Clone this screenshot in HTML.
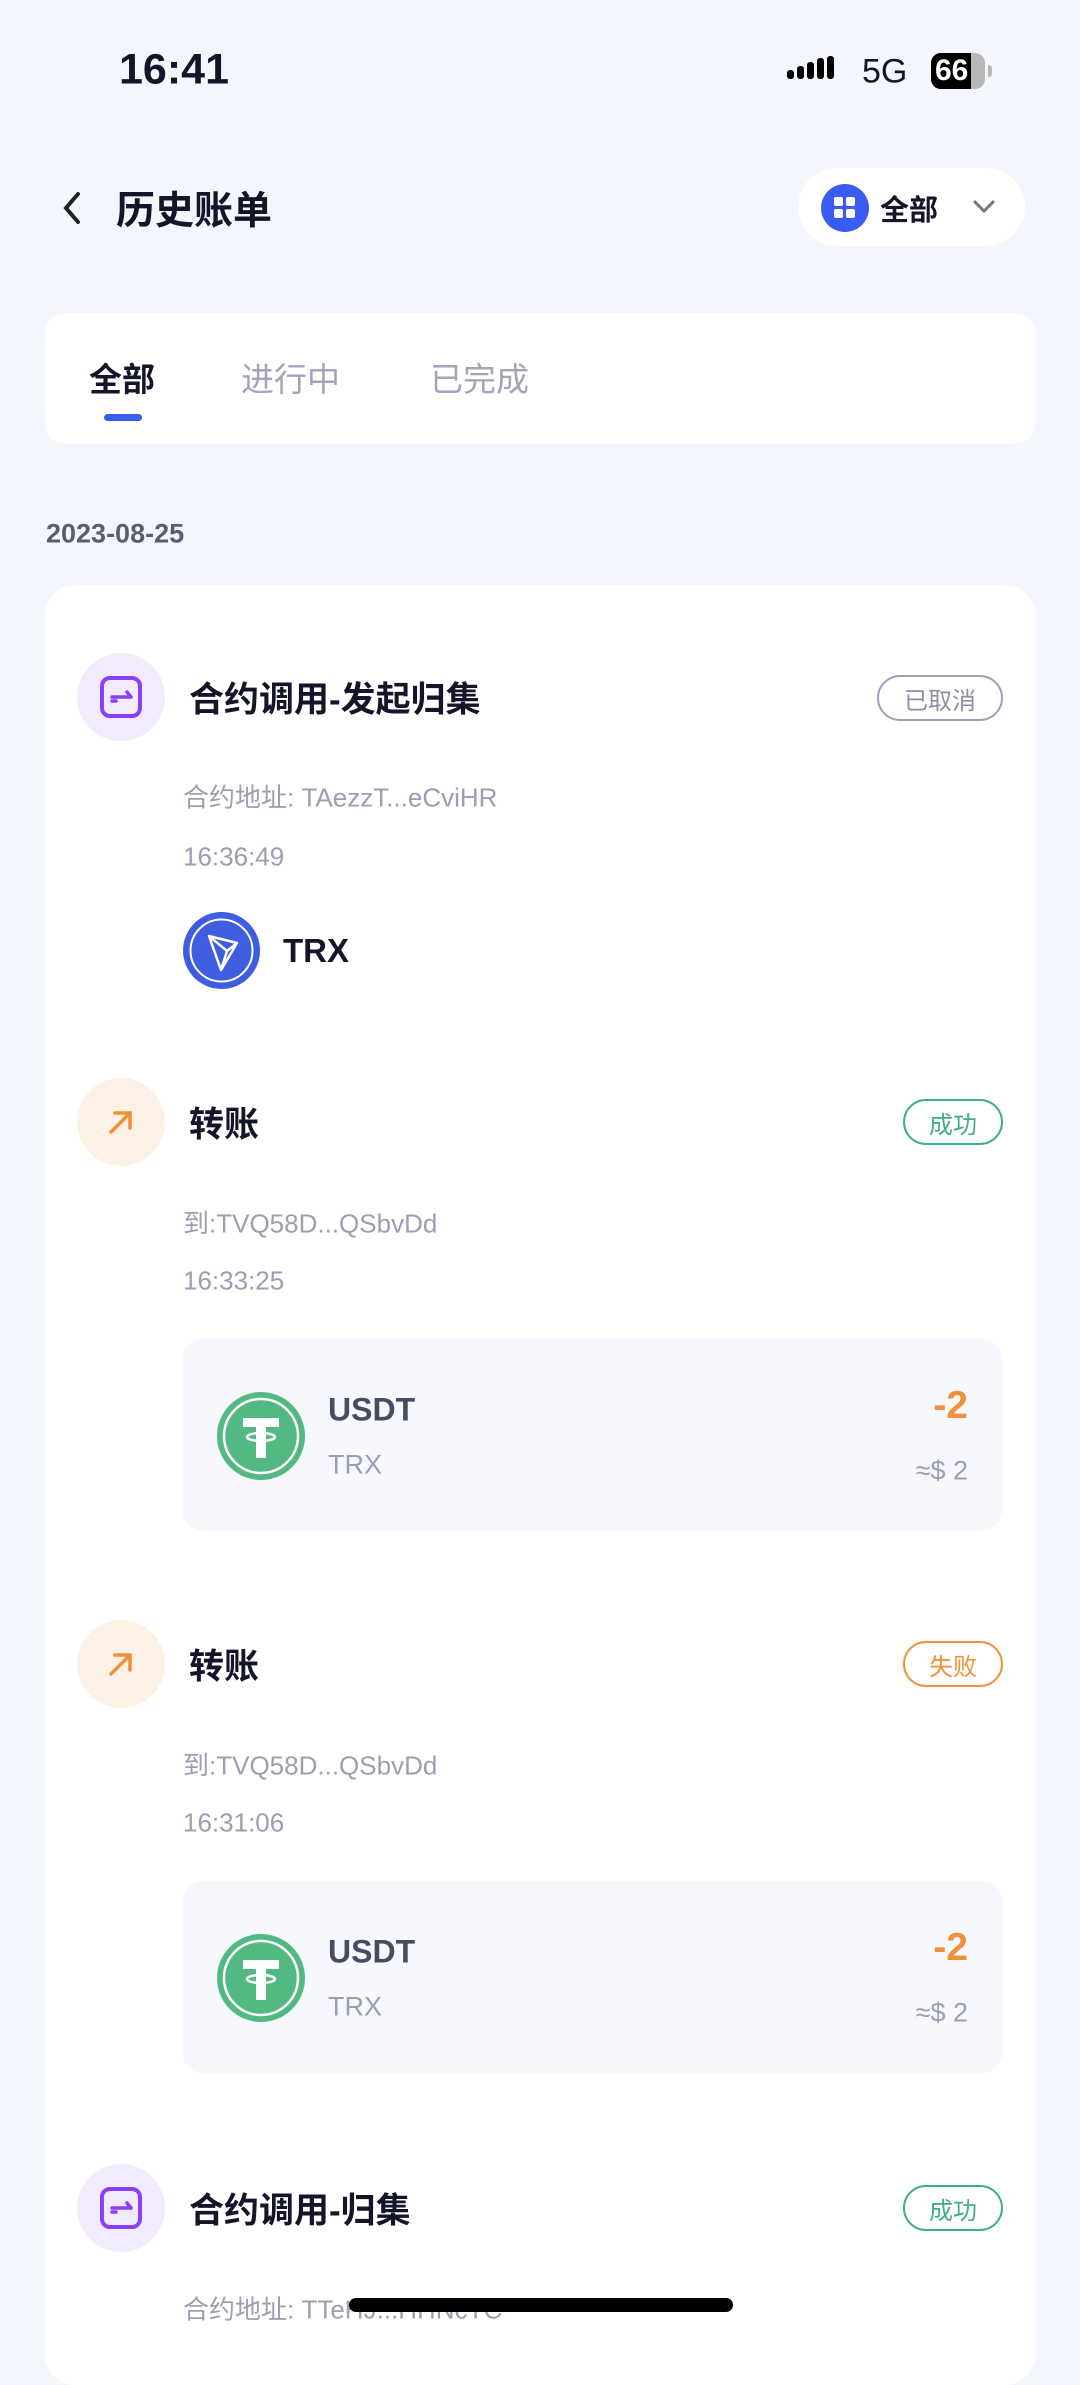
<!DOCTYPE html>
<html><head><meta charset="utf-8"><style>
*{margin:0;padding:0;box-sizing:border-box}
body{width:1080px;height:2337px;background:#f3f6fd;font-family:"Liberation Sans","Noto Sans CJK SC",sans-serif;position:relative;overflow:hidden;color:#15152a}
.a{position:absolute;white-space:nowrap}
.vc{transform:translateY(-50%)}
.card{position:absolute;background:#fff}
.ic{position:absolute;width:88px;height:88px;border-radius:50%;display:flex;align-items:center;justify-content:center}
.title{font-size:35px;font-weight:bold}
.gray{color:#9d9db3;font-size:26px}
.badge{position:absolute;height:46px;border-radius:23px;border:2px solid;font-size:24px;display:flex;align-items:center;justify-content:center}
.box{position:absolute;left:182px;width:821px;height:192px;background:#f7f8fd;border-radius:22px}
</style></head><body>
<div class="a vc" style="left:119px;top:70px;font-size:43px;font-weight:bold">16:41</div>
<svg class="a" style="left:787px;top:56px" width="50" height="30"><g fill="#000"><rect x="0" y="14" width="7" height="9" rx="3"/><rect x="10" y="10" width="7" height="13" rx="3"/><rect x="20" y="6" width="7" height="17" rx="3"/><rect x="30" y="2" width="7" height="21" rx="3"/><rect x="40" y="0" width="7" height="23" rx="3"/></g></svg>
<div class="a vc" style="left:862px;top:72px;font-size:34px">5G</div>
<div class="a" style="left:931px;top:53px;width:54px;height:36px;border-radius:10px;background:#b8b8b8;overflow:hidden"><div style="width:40px;height:36px;background:#000"></div><div class="a" style="left:4px;top:1px;font-size:30px;font-weight:bold;color:#fff">66</div></div>
<div class="a" style="left:988px;top:65px;width:4px;height:12px;background:#b8b8b8;border-radius:0 3px 3px 0"></div>

<svg class="a" style="left:58px;top:190px" width="28" height="36"><path d="M20 4 L8 18 L20 32" fill="none" stroke="#222" stroke-width="4" stroke-linecap="round"/></svg>
<div class="a vc" style="left:116px;top:208px;font-size:39px;font-weight:bold">历史账单</div>
<div class="a" style="left:798px;top:168px;width:227px;height:78px;border-radius:39px;background:#fff"></div>
<div class="a" style="left:821px;top:184px;width:48px;height:48px;border-radius:50%;background:#3a5cf0"></div>
<svg class="a" style="left:833px;top:196px" width="24" height="24"><g fill="#fff"><rect x="1" y="1" width="9" height="9" rx="2"/><rect x="13" y="1" width="9" height="9" rx="2"/><rect x="1" y="13" width="9" height="9" rx="2"/><rect x="13" y="13" width="9" height="9" rx="2"/></g></svg>
<div class="a vc" style="left:880px;top:208px;font-size:29px;font-weight:bold">全部</div>
<svg class="a" style="left:972px;top:198px" width="24" height="18"><path d="M3 4 L12 13 L21 4" fill="none" stroke="#777" stroke-width="3" stroke-linecap="round"/></svg>

<div class="card" style="left:45px;top:313px;width:990px;height:131px;border-radius:20px"></div>
<div class="a vc" style="left:89px;top:377px;font-size:33px;font-weight:bold">全部</div>
<div class="a vc" style="left:241px;top:377px;font-size:33px;color:#a3a3bb">进行中</div>
<div class="a vc" style="left:430px;top:377px;font-size:33px;color:#a3a3bb">已完成</div>
<div class="a" style="left:104px;top:414px;width:38px;height:7px;border-radius:4px;background:#3a5cf0"></div>

<div class="a vc" style="left:46px;top:534px;font-size:27px;color:#5c5c70;font-weight:bold">2023-08-25</div>

<div class="card" style="left:45px;top:585px;width:990px;height:1800px;border-radius:30px"></div>

<!-- item1 -->
<div class="ic" style="left:77px;top:653px;background:#f2eafd"><svg width="44" height="44"><rect x="3" y="3" width="38" height="38" rx="8" fill="none" stroke="#8a3ffc" stroke-width="4"/><path d="M13 22 H31 M28 17 L32 22 M13 26 L17 26" stroke="#8a3ffc" stroke-width="3.5" fill="none" stroke-linecap="round"/></svg></div>
<div class="a vc title" style="left:189px;top:697px">合约调用-发起归集</div>
<div class="badge" style="left:877px;top:675px;width:126px;border-color:#a0a0b8;color:#8e8ea6">已取消</div>
<div class="a vc gray" style="left:183px;top:796px">合约地址: TAezzT...eCviHR</div>
<div class="a vc gray" style="left:183px;top:857px">16:36:49</div>
<div class="a" style="left:183px;top:912px;width:77px;height:77px;border-radius:50%;background:#3e5de0"></div>
<svg class="a" style="left:183px;top:912px" width="77" height="77"><circle cx="38.5" cy="38.5" r="31" fill="none" stroke="#fff" stroke-width="2"/><path d="M26 24 L54 31 L38 58 Z M26 24 L44 39 L54 31 M44 39 L38 58" fill="none" stroke="#fff" stroke-width="2.5" stroke-linejoin="round"/></svg>
<div class="a vc" style="left:283px;top:951px;font-size:33px;font-weight:bold">TRX</div>

<!-- item2 -->
<div class="ic" style="left:77px;top:1078px;background:#fdf1e6"><svg width="40" height="40"><path d="M10 30 L29 11 M14 11 H29 V26" fill="none" stroke="#f0913a" stroke-width="3.5" stroke-linecap="round"/></svg></div>
<div class="a vc title" style="left:189px;top:1122px">转账</div>
<div class="badge" style="left:903px;top:1099px;width:100px;border-color:#3fae86;color:#3fae86">成功</div>
<div class="a vc gray" style="left:183px;top:1222px">到:TVQ58D...QSbvDd</div>
<div class="a vc gray" style="left:183px;top:1281px">16:33:25</div>
<div class="box" style="top:1339px"></div>
<svg class="a" style="left:217px;top:1392px" width="88" height="88"><ellipse cx="44" cy="44" rx="44" ry="44" fill="#53b983"/><circle cx="44" cy="44" r="37" fill="none" stroke="#fff" stroke-width="2.5"/><path d="M26 26 H62 V35 H49 V66 H39 V35 H26 Z" fill="#fff"/><ellipse cx="44" cy="45" rx="14" ry="4" fill="none" stroke="#fff" stroke-width="2.5"/></svg>
<div class="a vc" style="left:328px;top:1410px;font-size:32px;font-weight:bold;color:#4a4a62">USDT</div>
<div class="a vc" style="left:328px;top:1465px;font-size:27px;color:#9d9db3">TRX</div>
<div class="a vc" style="right:112px;top:1406px;font-size:39px;font-weight:bold;color:#f0913a">-2</div>
<div class="a vc" style="right:112px;top:1471px;font-size:27px;color:#9d9db3">≈$ 2</div>

<!-- item3 -->
<div class="ic" style="left:77px;top:1620px;background:#fdf1e6"><svg width="40" height="40"><path d="M10 30 L29 11 M14 11 H29 V26" fill="none" stroke="#f0913a" stroke-width="3.5" stroke-linecap="round"/></svg></div>
<div class="a vc title" style="left:189px;top:1664px">转账</div>
<div class="badge" style="left:903px;top:1641px;width:100px;border-color:#f0913a;color:#f0913a">失败</div>
<div class="a vc gray" style="left:183px;top:1764px">到:TVQ58D...QSbvDd</div>
<div class="a vc gray" style="left:183px;top:1823px">16:31:06</div>
<div class="box" style="top:1881px"></div>
<svg class="a" style="left:217px;top:1934px" width="88" height="88"><ellipse cx="44" cy="44" rx="44" ry="44" fill="#53b983"/><circle cx="44" cy="44" r="37" fill="none" stroke="#fff" stroke-width="2.5"/><path d="M26 26 H62 V35 H49 V66 H39 V35 H26 Z" fill="#fff"/><ellipse cx="44" cy="45" rx="14" ry="4" fill="none" stroke="#fff" stroke-width="2.5"/></svg>
<div class="a vc" style="left:328px;top:1952px;font-size:32px;font-weight:bold;color:#4a4a62">USDT</div>
<div class="a vc" style="left:328px;top:2007px;font-size:27px;color:#9d9db3">TRX</div>
<div class="a vc" style="right:112px;top:1948px;font-size:39px;font-weight:bold;color:#f0913a">-2</div>
<div class="a vc" style="right:112px;top:2013px;font-size:27px;color:#9d9db3">≈$ 2</div>

<!-- item4 -->
<div class="ic" style="left:77px;top:2164px;background:#f2eafd"><svg width="44" height="44"><rect x="3" y="3" width="38" height="38" rx="8" fill="none" stroke="#8a3ffc" stroke-width="4"/><path d="M13 22 H31 M28 17 L32 22 M13 26 L17 26" stroke="#8a3ffc" stroke-width="3.5" fill="none" stroke-linecap="round"/></svg></div>
<div class="a vc title" style="left:189px;top:2208px">合约调用-归集</div>
<div class="badge" style="left:903px;top:2185px;width:100px;border-color:#3fae86;color:#3fae86">成功</div>
<div class="a vc gray" style="left:183px;top:2308px">合约地址: TTeHJ...HHNcTC</div>
<div class="a" style="left:349px;top:2298px;width:384px;height:14px;border-radius:7px;background:#000"></div>
</body></html>
